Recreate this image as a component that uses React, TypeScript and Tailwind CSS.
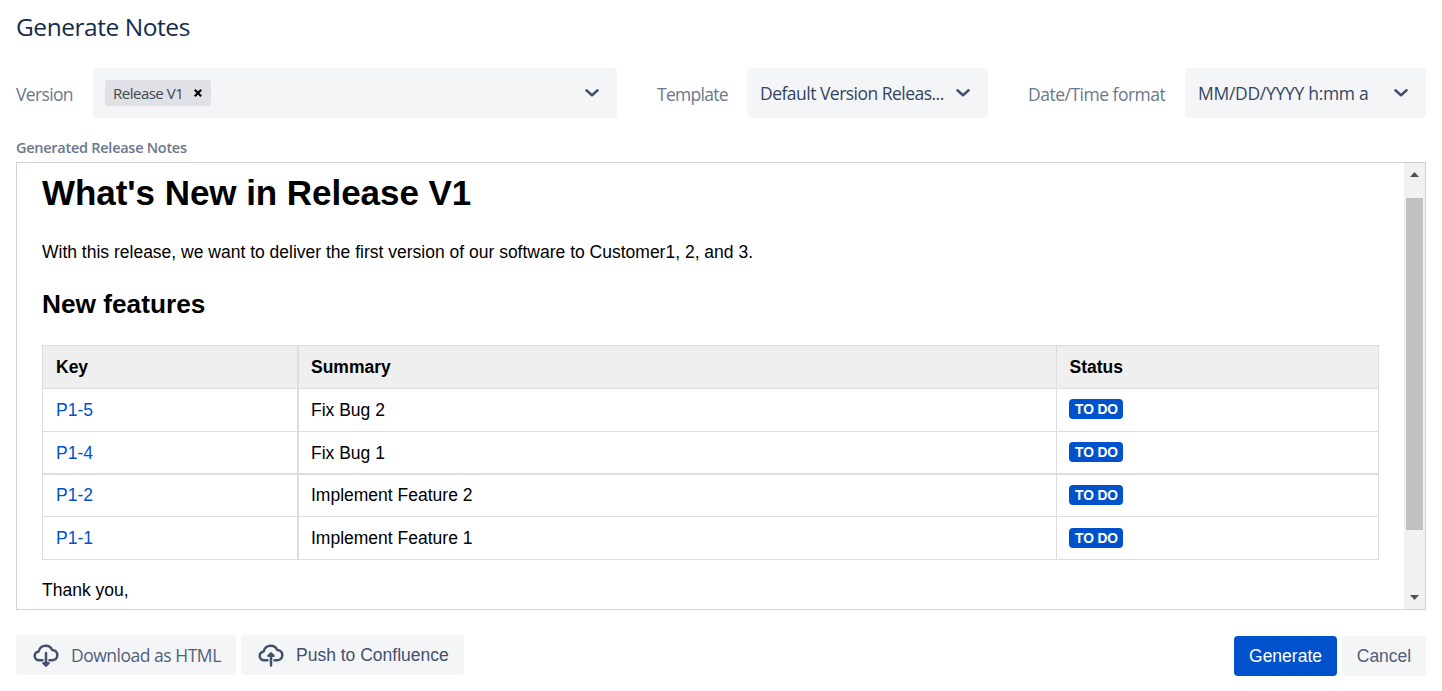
import type { ReactNode } from 'react';

const uiFont = "font-['Open_Sans','Noto_Sans',sans-serif]";
const docFont = "font-['Liberation_Sans',Arial,sans-serif]";

const issues = [
  { key: 'P1-5', summary: 'Fix Bug 2', row: 'h-[43px] border-b', text: 'pt-[11px]', badge: 'pt-[10px]' },
  { key: 'P1-4', summary: 'Fix Bug 1', row: 'h-[43px] border-b-2', text: 'pt-[11px]', badge: 'pt-[10px]' },
  { key: 'P1-2', summary: 'Implement Feature 2', row: 'h-[42px] border-b', text: 'pt-[10px]', badge: 'pt-[10px]' },
  { key: 'P1-1', summary: 'Implement Feature 1', row: 'h-[43px] border-b', text: 'pt-[11px]', badge: 'pt-[11px]' },
];

function Chevron() {
  return (
    <svg className="shrink-0" width="16" height="10" viewBox="0 0 16 10" fill="none" stroke="#42526e" strokeWidth="2.5" strokeLinecap="round" strokeLinejoin="round">
      <path d="M2.4 2.3 8 7.2 13.6 2.3" />
    </svg>
  );
}

function Select({ className, children }: { className: string; children: ReactNode }) {
  return (
    <div className={`flex h-[50px] items-center justify-between rounded-[4px] bg-[#f4f5f7] pr-[17px] ${className}`}>
      {children}
      <Chevron />
    </div>
  );
}

function Label({ className, children }: { className: string; children: ReactNode }) {
  return (
    <div className={`shrink-0 whitespace-nowrap pt-px text-[17.5px] leading-6 text-[#6b778c] ${className}`}>{children}</div>
  );
}

function CloudIcon({ up = false }: { up?: boolean }) {
  return (
    <svg className="shrink-0" width="26" height="23" viewBox="0 0 26 23" fill="none" stroke="#42526e" strokeWidth="2.5" strokeLinecap="round" strokeLinejoin="round">
      <path d="M9.500 16.300H6.300C3.600 16.300 1.700 14.500 1.700 12 1.700 9.500 3.300 7.800 5.700 7.400 6.300 4 9.200 1.700 12.700 1.700 15.700 1.700 18.100 3.300 19.100 5.900 22.200 6 24.300 8.200 24.300 11.100 24.300 14.200 22 16.300 19 16.300H16.500" />
      {up ? <path d="M13 21.500V10M10.500 11.800 13 9.300 15.500 11.800Z" /> : <path d="M13 9V20.500M10.500 19.200 13 21.600 15.500 19.200Z" />}
    </svg>
  );
}

export default function App() {
  return (
    <div className={`h-[691px] w-[1442px] overflow-hidden bg-white px-4 ${uiFont}`}>
      <h1 className="h-[68px] pt-[11px] text-[24.5px] font-medium leading-8 tracking-[-0.45px] text-[#172b4d]">Generate Notes</h1>

      <div className="flex h-[50px] items-center">
        <Label className="w-[77px] tracking-[-0.65px]">Version</Label>
        <Select className="w-[524px] pl-3">
          <div className="flex h-[26px] w-[106px] items-center justify-between rounded-[3px] bg-[#dfe1e6] pl-2 pr-[9px]">
            <span className="whitespace-nowrap pb-px text-[15px] leading-5 tracking-[-0.5px] text-[#42464d]">Release V1</span>
            <svg width="8" height="8" viewBox="0 0 8 8" stroke="#000" strokeWidth="2.2">
              <path d="M0.800 0.800 7.200 7.200M7.200 0.800 0.800 7.200" />
            </svg>
          </div>
        </Select>
        <Label className="ml-10 w-[90px] tracking-[-0.7px]">Template</Label>
        <Select className="w-[241px] pl-[13px]">
          <span className="whitespace-nowrap text-[17.5px] leading-6 tracking-[-0.52px] text-[#344563]">Default Version Releas...</span>
        </Select>
        <Label className="ml-10 w-[157px] tracking-[-0.5px]">Date/Time format</Label>
        <Select className="w-[241px] pl-[13px]">
          <span className="whitespace-nowrap text-[17.5px] leading-6 tracking-[-0.29px] text-[#344563]">MM/DD/YYYY h:mm a</span>
        </Select>
      </div>

      <div className="h-[44px] pt-5 text-[14.5px] font-semibold leading-5 tracking-[-0.27px] text-[#6b778c]">Generated Release Notes</div>

      <div className={`flex h-[448px] overflow-hidden border border-[#cdd1db] ${docFont} text-[17.500px] text-black`}>
        <div className="min-w-0 flex-1 overflow-hidden pl-[25px] pr-[25px]">
          <h2 className="pt-[10px] text-[35px] font-bold leading-[40px] tracking-[-0.05px]">What's New in Release V1</h2>
          <p className="pt-[29px] leading-5">With this release, we want to deliver the first version of our software to Customer1, 2, and 3.</p>
          <h3 className="h-[83px] pt-[27px] text-[26.250px] font-bold leading-[30px]">New features</h3>

          <div className="w-[1337px] border-l border-r border-t border-[#ddd]">
            <div className="grid h-[43px] grid-cols-[256px_758px_1fr] border-b border-[#ddd] bg-[#efefef] font-bold leading-5">
              <div className="border-r-2 border-[#ddd] pl-[13px] pt-[11px]">Key</div>
              <div className="border-r border-[#ddd] pl-3 pt-[11px]">Summary</div>
              <div className="pl-[12.5px] pt-[11px]">Status</div>
            </div>
            {issues.map((issue) => (
              <div key={issue.key} className={`grid grid-cols-[256px_758px_1fr] border-[#ddd] leading-5 ${issue.row}`}>
                <div className={`border-r-2 border-[#ddd] pl-[13px] text-[#0052cc] ${issue.text}`}>{issue.key}</div>
                <div className={`border-r border-[#ddd] pl-3 ${issue.text}`}>{issue.summary}</div>
                <div className={`pl-3 ${issue.badge}`}>
                  <span className="flex h-5 w-[54px] items-center justify-center rounded-[4px] bg-[#0052cc] pl-px pt-px text-[13.750px] font-bold leading-[19px] tracking-[-0.1px] text-white">TO DO</span>
                </div>
              </div>
            ))}
          </div>
          <p className="pt-5 leading-5">Thank you,</p>
        </div>

        <div className="flex w-[21px] flex-col items-center bg-[#f1f1f1]">
          <svg className="mt-[9px] shrink-0" width="9" height="5" viewBox="0 0 9 5" fill="#505050"><path d="M0 5 4.500 0 9 5Z" /></svg>
          <div className="mt-[21px] h-[332px] w-[17px] bg-[#c1c1c1]" />
          <svg className="mt-[65px] shrink-0" width="9" height="5" viewBox="0 0 9 5" fill="#505050"><path d="M0 0H9L4.500 5Z" /></svg>
        </div>
      </div>

      <div className="flex pt-[25px] text-[17.5px] leading-6 text-[#42526e]">
        <button className="flex h-10 w-[220px] items-center whitespace-nowrap rounded-[4px] bg-[#f4f5f7] pl-[17px]">
          <CloudIcon />
          <span className="ml-3 tracking-[-0.48px] text-[#505f79]">Download as HTML</span>
        </button>
        <button className={`ml-[5px] flex h-10 w-[223px] items-center whitespace-nowrap rounded-[4px] bg-[#f4f5f7] pl-[17px] text-[17.500px] ${docFont}`}>
          <CloudIcon up />
          <span className="ml-3">Push to Confluence</span>
        </button>
        <button className={`ml-auto mt-px h-10 w-[103px] rounded-[4px] bg-[#0052cc] text-[17.500px] text-white ${docFont}`}>Generate</button>
        <button className={`ml-[5px] mt-px h-10 w-[84px] rounded-[4px] bg-[#f4f5f7] text-[17.500px] text-[#505f79] ${docFont}`}>Cancel</button>
      </div>
    </div>
  );
}
